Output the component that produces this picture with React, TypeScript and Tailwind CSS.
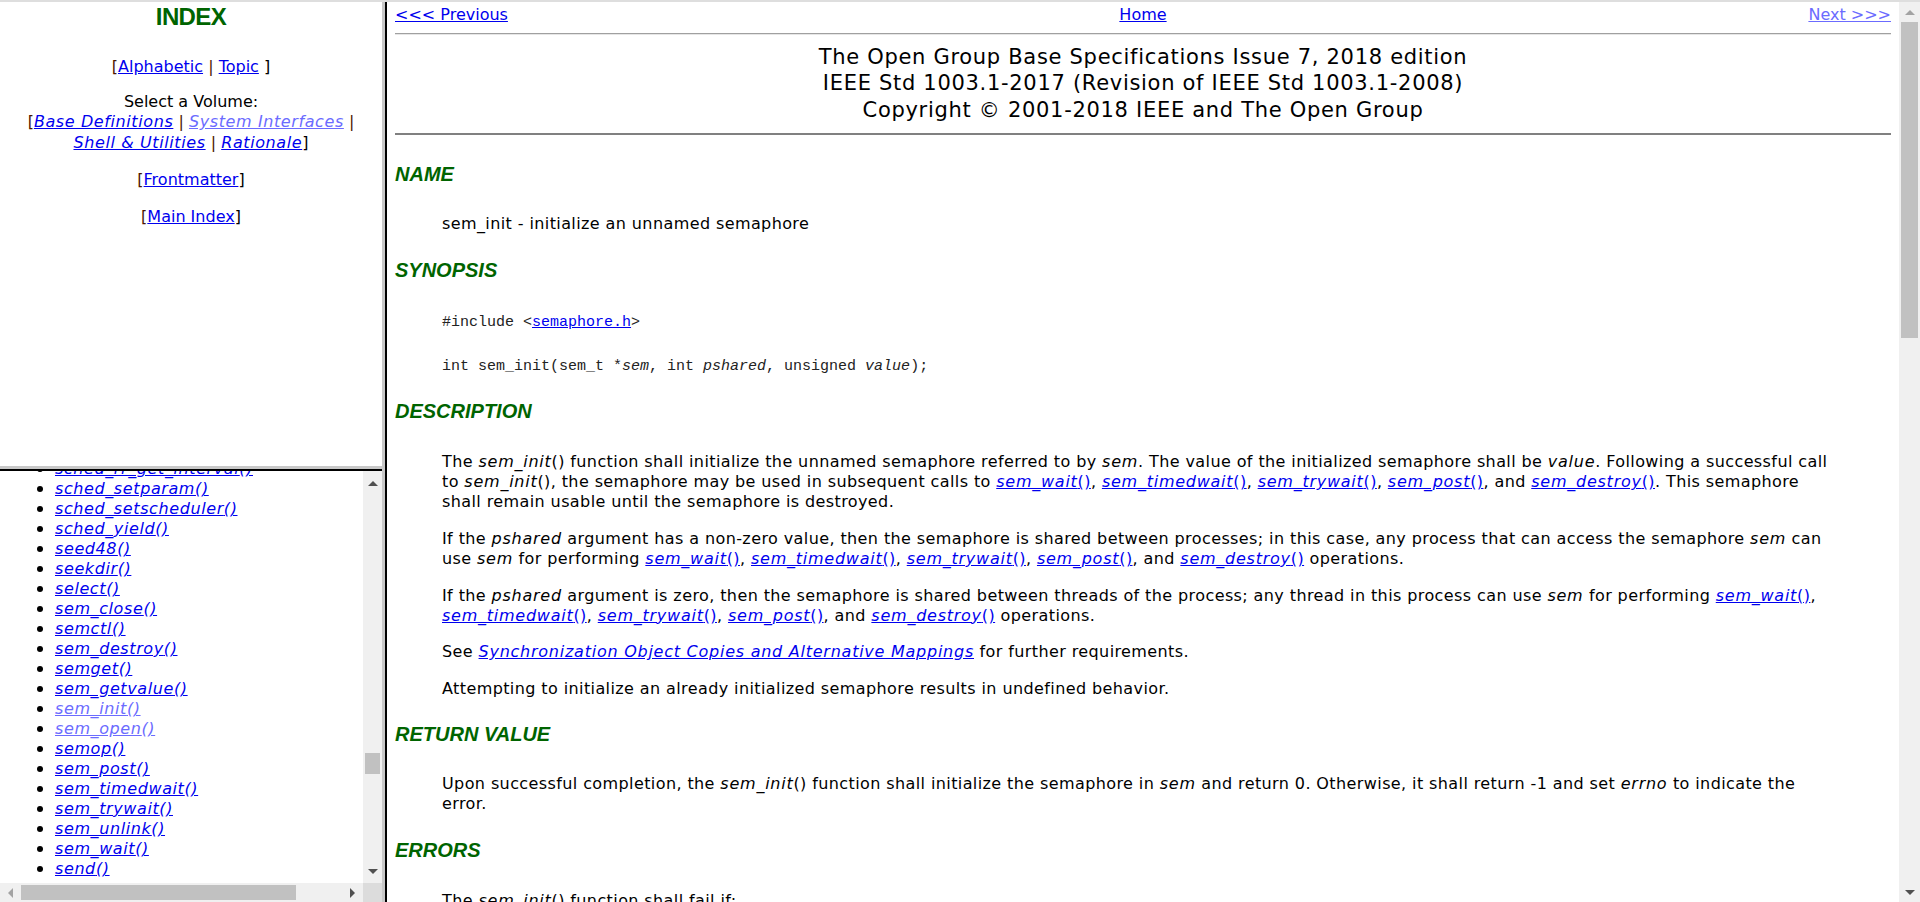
import React from 'react';

type Kids = { children?: React.ReactNode };

const Link = ({ children, visited = false }: Kids & { visited?: boolean }) => (
  <a href="#" className={visited ? 'text-[#6b6bff] underline' : 'text-[#0000ee] underline'}>
    {children}
  </a>
);

// function reference in the spec: italic name, upright parens, whole thing linked
const Fn = ({ name }: { name: string }) => (
  <Link>
    <i>{name}</i>()
  </Link>
);

// opening brackets and bars show a warm tint in the original rendering
const Br = ({ children }: Kids) => <span className="text-[#4a1500]">{children}</span>;

const Heading = ({ children, className = '' }: Kids & { className?: string }) => (
  <h4
    className={`font-['Liberation_Sans',Arial,sans-serif] font-bold italic text-[20px] leading-[24px] text-[#006400] ${className}`}
  >
    {children}
  </h4>
);

const Text = ({ children, className = '' }: Kids & { className?: string }) => (
  <p className={`ml-[47px] mr-[59px] text-[16px] leading-[20px] tracking-[0.4px] [&_i]:tracking-[0.75px] ${className}`}>
    {children}
  </p>
);

const Arrow = ({ dir, light = false }: { dir: 'up' | 'down' | 'left' | 'right'; light?: boolean }) => {
  const pts = {
    up: '0,5 5,0 10,5',
    down: '0,0 10,0 5,5',
    left: '5,0 5,10 0,5',
    right: '0,0 0,10 5,5',
  }[dir];
  const vertical = dir === 'up' || dir === 'down';
  return (
    <svg width={vertical ? 10 : 5} height={vertical ? 5 : 10} viewBox={vertical ? '0 0 10 5' : '0 0 5 10'}>
      <polygon points={pts} fill={light ? '#a3a3a3' : '#505050'} />
    </svg>
  );
};

const indexList = [
  'sched_rr_get_interval',
  'sched_setparam',
  'sched_setscheduler',
  'sched_yield',
  'seed48',
  'seekdir',
  'select',
  'sem_close',
  'semctl',
  'sem_destroy',
  'semget',
  'sem_getvalue',
  'sem_init',
  'sem_open',
  'semop',
  'sem_post',
  'sem_timedwait',
  'sem_trywait',
  'sem_unlink',
  'sem_wait',
  'send',
];
const visitedFns = ['sem_init', 'sem_open'];

const TopIndex = () => (
  <div className="h-[464px] overflow-hidden px-[8px] text-center text-[16px] leading-[20px] text-black">
    <h2 className="mt-[1px] font-['Liberation_Sans',Arial,sans-serif] font-bold text-[24px] leading-[28px] tracking-[-0.6px] text-[#006400]">
      INDEX
    </h2>
    <p className="mt-[25.7px]">
      <Br>[</Br>
      <Link>Alphabetic</Link> <Br>|</Br> <Link>Topic</Link> ]
    </p>
    <p className="mt-[15px] leading-[20.5px]">
      Select a Volume:
      <br />
      <Br>[</Br>
      <Link>
        <i className="tracking-[0.6px]">Base Definitions</i>
      </Link>{' '}
      <Br>|</Br>{' '}
      <Link visited>
        <i className="tracking-[0.6px]">System Interfaces</i>
      </Link>{' '}
      <Br>|</Br>
      <br />
      <Link>
        <i className="tracking-[0.6px]">Shell &amp; Utilities</i>
      </Link>{' '}
      <Br>|</Br>{' '}
      <Link>
        <i className="tracking-[0.6px]">Rationale</i>
      </Link>
      ]
    </p>
    <p className="mt-[16.8px]">
      <Br>[</Br>
      <Link>Frontmatter</Link>]
    </p>
    <p className="mt-[16.7px]">
      <Br>[</Br>
      <Link>Main Index</Link>]
    </p>
  </div>
);

const BottomList = () => (
  <div className="flex-1 flex flex-col min-h-0">
    <div className="flex flex-1 min-h-0">
      <div className="flex-1 overflow-hidden">
        <ul className="-mt-[12px] text-[16px] leading-[20px] tracking-[0.6px]">
          {indexList.map((fn) => (
            <li key={fn} className="flex items-center h-[20px]">
              <span className="ml-[37px] mr-[12px] w-[6px] h-[6px] rounded-full bg-black shrink-0" />
              <Link visited={visitedFns.includes(fn)}>
                <i>{fn}()</i>
              </Link>
            </li>
          ))}
        </ul>
      </div>
      <div className="w-[19px] bg-[#f0f0f0] flex flex-col items-center">
        <div className="h-[24px] flex items-center justify-center">
          <Arrow dir="up" />
        </div>
        <div className="mt-[258px] w-[15px] h-[21px] bg-[#c1c1c1]" />
        <div className="flex-1" />
        <div className="h-[24px] flex items-center justify-center">
          <Arrow dir="down" />
        </div>
      </div>
    </div>
    <div className="h-[19px] flex">
      <div className="flex-1 bg-[#f0f0f0] flex items-center">
        <div className="w-[21px] flex justify-center">
          <Arrow dir="left" light />
        </div>
        <div className="w-[275px] h-[15px] bg-[#c1c1c1]" />
        <div className="flex-1" />
        <div className="w-[22px] flex justify-center">
          <Arrow dir="right" />
        </div>
      </div>
      <div className="w-[19px] bg-[#dcdcdc]" />
    </div>
  </div>
);

const MainFrame = () => (
  <div className="flex-1 flex min-w-0">
    <div className="flex-1 overflow-hidden px-[8px] pt-[3px] text-[16px] leading-[20px] text-black">
      <div className="grid grid-cols-3 h-[20px]">
        <div className="text-left">
          <Link>&lt;&lt;&lt; Previous</Link>
        </div>
        <div className="text-center">
          <Link>Home</Link>
        </div>
        <div className="text-right">
          <Link visited>Next &gt;&gt;&gt;</Link>
        </div>
      </div>
      <div className="mt-[8px] border-t border-t-[#a0a0a0] border-b border-b-[#e6e6e6]" />
      <div className="mt-[8.8px] text-center text-[21px] leading-[26.6px] tracking-[0.7px]">
        The Open Group Base Specifications Issue 7, 2018 edition
        <br />
        IEEE Std 1003.1-2017 (Revision of IEEE Std 1003.1-2008)
        <br />
        Copyright © 2001-2018 IEEE and The Open Group
      </div>
      <div className="mt-[9.5px] h-[2px] bg-[#808080]" />

      <Heading className="mt-[26.5px]">NAME</Heading>
      <Text className="mt-[28.5px]">sem_init - initialize an unnamed semaphore</Text>

      <Heading className="mt-[24.2px]">SYNOPSIS</Heading>
      <div className="ml-[47px] font-['Liberation_Mono','Courier_New',monospace] text-[15px] leading-[20px] text-[#222]">
        <p className="mt-[30.3px]">
          #include &lt;<Link>semaphore.h</Link>&gt;
        </p>
        <p className="mt-[24px]">
          int sem_init(sem_t *<i>sem</i>, int <i>pshared</i>, unsigned <i>value</i>);
        </p>
      </div>

      <Heading className="mt-[22.7px]">DESCRIPTION</Heading>
      <Text className="mt-[29.1px]">
        The <i>sem_init</i>() function shall initialize the unnamed semaphore referred to by <i>sem</i>. The value of
        the initialized semaphore shall be <i>value</i>. Following a successful call to <i>sem_init</i>(), the semaphore
        may be used in subsequent calls to <Fn name="sem_wait" />, <Fn name="sem_timedwait" />,{' '}
        <Fn name="sem_trywait" />, <Fn name="sem_post" />, and <Fn name="sem_destroy" />. This semaphore shall remain
        usable until the semaphore is destroyed.
      </Text>
      <Text className="mt-[16.6px]">
        If the <i>pshared</i> argument has a non-zero value, then the semaphore is shared between processes; in this
        case, any process that can access the semaphore <i>sem</i> can use <i>sem</i> for performing{' '}
        <Fn name="sem_wait" />, <Fn name="sem_timedwait" />, <Fn name="sem_trywait" />, <Fn name="sem_post" />, and{' '}
        <Fn name="sem_destroy" /> operations.
      </Text>
      <Text className="mt-[16.6px]">
        If the <i>pshared</i> argument is zero, then the semaphore is shared between threads of the process; any thread
        in this process can use <i>sem</i> for performing <Fn name="sem_wait" />, <Fn name="sem_timedwait" />,{' '}
        <Fn name="sem_trywait" />, <Fn name="sem_post" />, and <Fn name="sem_destroy" /> operations.
      </Text>
      <Text className="mt-[16.6px]">
        See{' '}
        <Link>
          <i>Synchronization Object Copies and Alternative Mappings</i>
        </Link>{' '}
        for further requirements.
      </Text>
      <Text className="mt-[16.6px]">Attempting to initialize an already initialized semaphore results in undefined behavior.</Text>

      <Heading className="mt-[23.5px]">RETURN VALUE</Heading>
      <Text className="mt-[27.8px]">
        Upon successful completion, the <i>sem_init</i>() function shall initialize the semaphore in <i>sem</i> and
        return 0. Otherwise, it shall return -1 and set <i>errno</i> to indicate the error.
      </Text>

      <Heading className="mt-[23.9px]">ERRORS</Heading>
      <Text className="mt-[29.1px]">
        The <i>sem_init</i>() function shall fail if:
      </Text>
    </div>
    <div className="w-[21px] bg-[#f0f0f0] flex flex-col items-center">
      <div className="h-[20px] flex items-center justify-center">
        <Arrow dir="up" light />
      </div>
      <div className="w-[17px] h-[316px] bg-[#c1c1c1]" />
      <div className="flex-1" />
      <div className="h-[20px] flex items-center justify-center">
        <Arrow dir="down" />
      </div>
    </div>
  </div>
);

export default function App() {
  return (
    <div className="w-[1920px] h-[902px] overflow-hidden bg-white flex flex-col font-['DejaVu_Sans',Verdana,sans-serif]">
      <div className="h-[2px] bg-[#dedede]" />
      <div className="flex flex-1 min-h-0">
        <div className="w-[382px] flex flex-col">
          <TopIndex />
          <div className="h-[3px] bg-[#c8c8c8]" />
          <div className="h-[2px] bg-black" />
          <BottomList />
        </div>
        <div className="w-[3px] bg-[#c8c8c8]" />
        <div className="w-[2px] bg-black" />
        <MainFrame />
      </div>
    </div>
  );
}
